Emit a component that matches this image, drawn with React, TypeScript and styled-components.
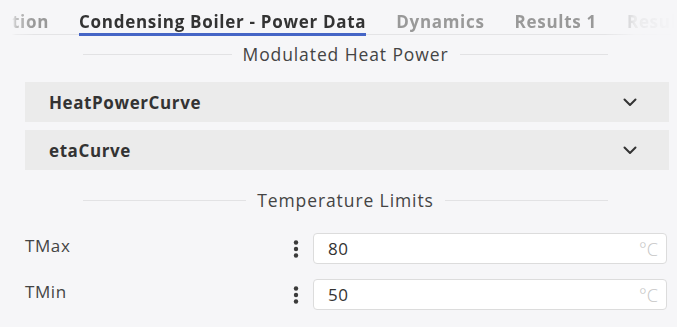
import styled, { createGlobalStyle } from 'styled-components';

const GlobalStyle = createGlobalStyle`
  html, body {
    margin: 0;
    padding: 0;
    background: #f6f6f8;
  }
  body {
    font-family: 'Open Sans', 'Noto Sans', sans-serif;
    color: #333;
  }
`;

const Page = styled.div`
  width: 677px;
  height: 327px;
  overflow: hidden;
  background: #f6f6f8;
`;

const fade =
  'linear-gradient(90deg, transparent 0, transparent 12px, rgba(0,0,0,0.55) 16px, #000 34px, #000 605px, rgba(0,0,0,0.12) 635px, transparent 677px)';

const TabBar = styled.div`
  height: 36px;
  overflow: hidden;
  -webkit-mask-image: ${fade};
  mask-image: ${fade};
`;

const TabStrip = styled.div`
  display: flex;
  align-items: flex-end;
  height: 34px;
  border-bottom: 1.5px solid #e4e4e6;
  margin-left: -3px;
`;

const Tab = styled.div<{ $active?: boolean }>`
  margin: 0 15px -1.5px;
  line-height: 23px;
  font-size: 17px;
  font-weight: 700;
  white-space: nowrap;
  letter-spacing: 0.7px;
  color: ${(p) => (p.$active ? '#333' : '#999')};
  border-bottom: 3px solid ${(p) => (p.$active ? '#4565c6' : 'transparent')};
`;

const Body = styled.div`
  padding: 0 8px 0 25px;
`;

const Divider = styled.div`
  display: flex;
  align-items: center;
  gap: 11px;
  margin: 0 61px 0 58px;
  height: 36px;
  font-size: 17.5px;
  letter-spacing: 0.9px;
  color: #444;
  white-space: nowrap;

  &::before,
  &::after {
    content: '';
    flex: 1;
    height: 1px;
    background: #e2e2e4;
  }
`;

const Accordions = styled.div`
  display: flex;
  flex-direction: column;
  gap: 8px;
  margin-top: 10px;
`;

const AccordionHeader = styled.div`
  display: flex;
  align-items: center;
  justify-content: space-between;
  height: 40px;
  padding: 0 32px 0 24px;
  background: #ebebeb;
  font-size: 17px;
  font-weight: 700;
  color: #333;
  letter-spacing: 0.6px;
`;

const Chevron = () => (
  <svg width="14" height="9" viewBox="0 0 14 9">
    <path d="M1.5 1.5 L7 7 L12.5 1.5" fill="none" stroke="#333" strokeWidth="2" strokeLinecap="round" strokeLinejoin="round" />
  </svg>
);

const Section = styled.div`
  margin-top: 12px;
`;

const FieldRow = styled.div`
  display: grid;
  grid-template-columns: 263px 25px 1fr;
  align-items: center;
  height: 31px;
  margin-top: 15px;
`;

const Label = styled.div`
  font-size: 17px;
  letter-spacing: 0.6px;
  color: #444;
  margin-top: -7px;
`;

const MenuDots = () => (
  <svg width="6" height="20" viewBox="0 0 6 20">
    <circle cx="3" cy="3.5" r="2.2" fill="#3a3a3a" />
    <circle cx="3" cy="10" r="2.2" fill="#3a3a3a" />
    <circle cx="3" cy="16.5" r="2.2" fill="#3a3a3a" />
  </svg>
);

const DotsCell = styled.div`
  display: flex;
  align-items: center;
  padding-left: 5px;
`;

const InputBox = styled.div`
  display: flex;
  align-items: center;
  justify-content: space-between;
  height: 29px;
  padding: 0 8px 0 14px;
  margin-right: 2px;
  background: #fff;
  border: 1px solid #dcdcdc;
  border-radius: 4px;
`;

const Value = styled.span`
  font-size: 17px;
  letter-spacing: 0.6px;
  color: #333;
`;

const Unit = styled.span`
  font-size: 18px;
  font-weight: 300;
  color: #c6c6c6;
`;

const fields = [
  { name: 'TMax', value: '80', unit: '°C' },
  { name: 'TMin', value: '50', unit: '°C' },
];

export default function App() {
  return (
    <Page>
      <GlobalStyle />
      <TabBar>
        <TabStrip>
          <Tab>tion</Tab>
          <Tab $active>Condensing Boiler - Power Data</Tab>
          <Tab>Dynamics</Tab>
          <Tab>Results 1</Tab>
          <Tab>Results 2</Tab>
        </TabStrip>
      </TabBar>
      <Body>
        <Divider>Modulated Heat Power</Divider>
        <Accordions>
          <AccordionHeader>
            HeatPowerCurve
            <Chevron />
          </AccordionHeader>
          <AccordionHeader>
            etaCurve
            <Chevron />
          </AccordionHeader>
        </Accordions>
        <Section>
          <Divider>Temperature Limits</Divider>
          {fields.map((f) => (
            <FieldRow key={f.name}>
              <Label>{f.name}</Label>
              <DotsCell>
                <MenuDots />
              </DotsCell>
              <InputBox>
                <Value>{f.value}</Value>
                <Unit>{f.unit}</Unit>
              </InputBox>
            </FieldRow>
          ))}
        </Section>
      </Body>
    </Page>
  );
}
